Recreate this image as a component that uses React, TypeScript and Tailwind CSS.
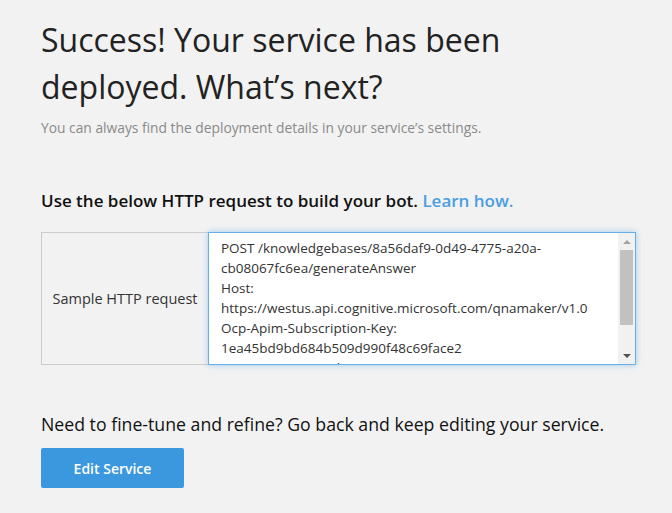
import React from "react";

const lines = [
  "POST /knowledgebases/8a56daf9-0d49-4775-a20a-",
  "cb08067fc6ea/generateAnswer",
  "Host:",
  "https://westus.api.cognitive.microsoft.com/qnamaker/v1.0",
  "Ocp-Apim-Subscription-Key:",
  "1ea45bd9bd684b509d990f48c69face2",
  "Content-Type: application/json",
];

export default function App() {
  return (
    <div
      className="min-h-[513px] w-full bg-[#f2f2f2] pl-[41px] pt-[16px] text-[#1f1f1f]"
      style={{ fontFamily: '"Open Sans", "Noto Sans", sans-serif' }}
    >
      <h1 className="text-[32px] leading-[47px] font-normal text-[#222]">
        Success! Your service has been
        <br />
        deployed. What’s next?
      </h1>
      <p className="mt-[8px] text-[13.8px] leading-[20px] text-[#8a8a8a]">
        You can always find the deployment details in your service’s settings.
      </p>
      <p className="mt-[52px] text-[17px] leading-[22px] font-semibold text-[#111]">
        Use the below HTTP request to build your bot.{" "}
        <span className="text-[#4a9ee0]">Learn how.</span>
      </p>
      <div className="mt-[20px] flex h-[133px] w-[595px] border border-[#cccccc]">
        <div className="flex w-[166px] items-center justify-center text-[14.5px] text-[#333]">
          Sample HTTP request
        </div>
        <div className="-my-px -mr-px flex flex-1 border border-[#66afe9] bg-white shadow-[0_0_6px_rgba(102,175,233,0.6)]">
          <div className="flex-1 overflow-hidden pl-[12px] pt-[5px] text-[13.5px] leading-[20px] text-[#333]">
            {lines.map((l) => (
              <div key={l} className="whitespace-nowrap">
                {l}
              </div>
            ))}
          </div>
          <div className="flex w-[17px] flex-col items-center bg-[#f1f1f1]">
            <div className="flex h-[17px] w-full items-center justify-center">
              <div className="h-0 w-0 border-x-[4px] border-b-[4px] border-x-transparent border-b-[#a3a3a3]" />
            </div>
            <div className="h-[75px] w-[13px] bg-[#c1c1c1]" />
            <div className="flex-1" />
            <div className="flex h-[17px] w-full items-center justify-center">
              <div className="h-0 w-0 border-x-[4px] border-t-[4px] border-x-transparent border-t-[#505050]" />
            </div>
          </div>
        </div>
      </div>
      <p className="mt-[48px] text-[17.7px] leading-[22px] text-[#111]">
        Need to fine-tune and refine? Go back and keep editing your service.
      </p>
      <button className="mt-[13px] flex h-[40px] w-[143px] items-center justify-center rounded-[2px] bg-[#3b97de] text-[14px] font-semibold text-white">
        Edit Service
      </button>
    </div>
  );
}
